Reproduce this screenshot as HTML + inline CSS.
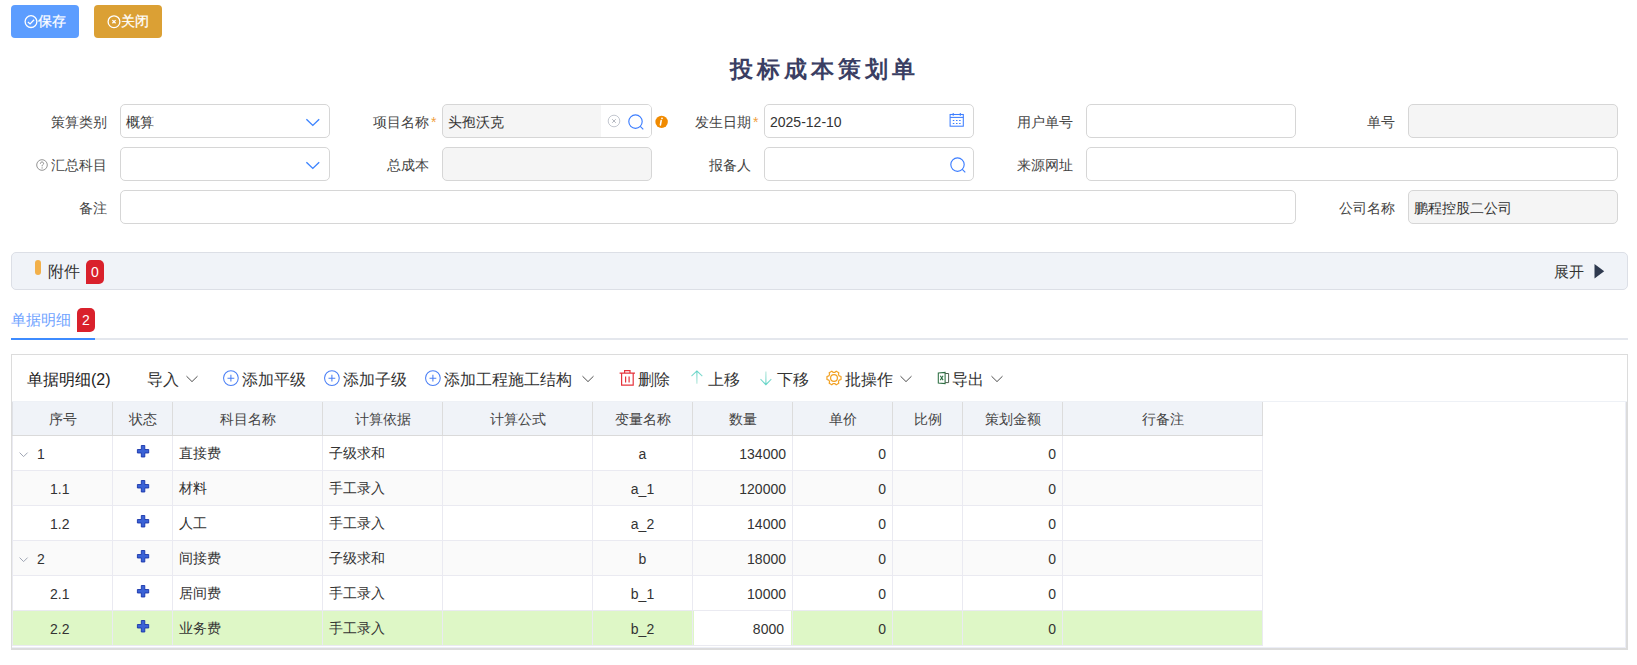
<!DOCTYPE html>
<html><head><meta charset="utf-8">
<style>
*{box-sizing:border-box;margin:0;padding:0}
html,body{width:1637px;height:665px;overflow:hidden;background:#fff;font-family:"Liberation Sans",sans-serif;color:#333;}
.abs{position:absolute}
.btn{position:absolute;top:5px;height:33px;width:68px;border-radius:4px;color:#fff;font-size:14px;line-height:33px;text-align:center}
.btn svg{position:absolute;top:10px;width:14px;height:14px}
.btn span{position:absolute;left:27px;top:0;-webkit-text-stroke:0.25px #fff}
.title{position:absolute;left:730px;top:52px;font-size:23px;font-weight:bold;color:#3a3e63;letter-spacing:4px;line-height:34px;white-space:nowrap}
.lbl{position:absolute;font-size:14px;color:#444;text-align:right;width:100px;line-height:36px;white-space:nowrap}
.inp{position:absolute;height:34px;border:1px solid #d6d6d6;border-radius:5px;background:#fff;font-size:14px;line-height:35px;padding-left:5px;color:#333}
.dis{background:#f5f5f5}
.star{color:#f0a040;font-size:14px;position:absolute;left:102px;top:0}

.badge{position:absolute;width:18px;height:24px;background:#d9212c;color:#fff;font-size:14px;line-height:25px;text-align:center;border-radius:5px 5px 5px 0}
.tb{font-size:16px;line-height:32px;color:#333;white-space:nowrap}
table.grid{border-collapse:collapse;table-layout:fixed;width:1250px;font-size:14px;color:#333}
.grid th{height:34px;padding-top:3px !important;background:#f0f3f8;font-weight:normal;color:#444;border:1px solid #dfe1e6;border-bottom-color:#dadada;border-right-color:#dcdcdc;border-top:0;text-align:center;padding:0}
.grid td{height:35px;border:1px solid #eaeaf1;padding:2px 6px 0 6px;white-space:nowrap;position:relative}
.grid tr.odd td{background:#fafafa}
.grid tr.sel td{background:#def7c6}
.grid tr.sel td.edit{background:#fff;box-shadow:inset 1px 0 0 #def7c6,inset -1px 0 0 #def7c6;padding-right:8px}
.ht{position:relative;top:1px}
.grid td.c{text-align:center}
.grid td.r{text-align:right}
.grid td.st svg.pl{position:absolute;left:23px;top:9px}
.chev{position:absolute;left:6px;top:16px}
.n1{position:absolute;left:24px;top:1px;line-height:34px}
.n2{position:absolute;left:37px;top:1px;line-height:34px}
</style></head><body>

<div class="btn" style="left:11px;background:#5c9dff">
  <svg style="left:13px" width="14" height="14" viewBox="0 0 14 14"><circle cx="7" cy="6.6" r="5.9" fill="none" stroke="#fff" stroke-width="1.3"/><path d="M3.9 6.9 L6.1 8.9 L10.1 4.8" fill="none" stroke="#fff" stroke-width="1.3"/></svg>
  <span>保存</span>
</div>
<div class="btn" style="left:94px;background:#dba034">
  <svg style="left:13px" width="14" height="14" viewBox="0 0 14 14"><circle cx="7" cy="6.7" r="5.9" fill="none" stroke="#fff" stroke-width="1.3"/><path d="M5.4 5.1 L8.6 8.3 M8.6 5.1 L5.4 8.3" fill="none" stroke="#fff" stroke-width="1.3"/></svg>
  <span>关闭</span>
</div>

<div class="title">投标成本策划单</div>

<!-- form row 1 -->
<div class="lbl" style="left:7px;top:104px">策算类别</div>
<div class="inp" style="left:120px;top:104px;width:210px">概算
  <svg class="abs" style="left:184px;top:13px" width="16" height="9" viewBox="0 0 16 9"><path d="M1.4 1.2 L7.8 7.4 L14.2 1.2" fill="none" stroke="#3d84ff" stroke-width="1.4"/></svg>
</div>

<div class="lbl" style="left:329px;top:104px">项目名称<span class="star">*</span></div>
<div class="inp dis" style="left:442px;top:104px;width:210px">头孢沃克
  <div class="abs" style="left:158px;top:0;width:50px;height:32px;background:#fff;border-radius:0 4px 4px 0"></div>
  <svg class="abs" style="left:164px;top:9px" width="14" height="14" viewBox="0 0 14 14"><circle cx="7" cy="7" r="5.8" fill="none" stroke="#c4c8d0" stroke-width="1"/><path d="M5.2 5.2 L8.8 8.8 M8.8 5.2 L5.2 8.8" stroke="#b4b8c0" stroke-width="1"/></svg>
  <svg class="abs" style="left:185px;top:9px" width="17" height="17" viewBox="0 0 17 17"><circle cx="7.5" cy="7.6" r="6.7" fill="none" stroke="#3d7eff" stroke-width="1.15"/><path d="M12.3 12.3 L15.3 15.3" stroke="#3d7eff" stroke-width="1.15"/></svg>
</div>
<svg class="abs" style="left:655px;top:115px" width="13" height="14" viewBox="0 0 13 14"><circle cx="6.6" cy="6.9" r="6.2" fill="#f08a00"/><path d="M6.2 5.5 L5.4 10" stroke="#fff" stroke-width="1.5" stroke-linecap="round"/><circle cx="7" cy="3.3" r="0.9" fill="#fff"/></svg>

<div class="lbl" style="left:651px;top:104px">发生日期<span class="star">*</span></div>
<div class="inp" style="left:764px;top:104px;width:210px">2025-12-10
  <svg class="abs" style="left:184px;top:7px" width="16" height="16" viewBox="0 0 16 16"><rect x="1.1" y="2.5" width="13.2" height="11.7" fill="none" stroke="#3d7eff" stroke-width="1.05"/><path d="M1.1 5.4 H14.3" stroke="#3d7eff" stroke-width="1.05"/><path d="M4.2 1 V3.8 M11.3 1 V3.8" stroke="#3d7eff" stroke-width="1.05"/><path d="M3.8 8.4 H5.3 M7 8.4 H8.5 M10.1 8.4 H11.6 M3.8 11.4 H5.3 M7 11.4 H8.5 M10.1 11.4 H11.6" stroke="#3d7eff" stroke-width="1.05"/></svg>
</div>

<div class="lbl" style="left:973px;top:104px">用户单号</div>
<div class="inp" style="left:1086px;top:104px;width:210px"></div>

<div class="lbl" style="left:1295px;top:104px">单号</div>
<div class="inp dis" style="left:1408px;top:104px;width:210px"></div>

<!-- form row 2 -->
<div class="lbl" style="left:7px;top:147px"><svg style="vertical-align:-1px;margin-right:3px" width="12" height="12" viewBox="0 0 12 12"><circle cx="6" cy="6" r="5.3" fill="none" stroke="#888" stroke-width="0.9"/><path d="M4.4 4.7 C4.4 3.6 5.1 3 6 3 C6.9 3 7.6 3.6 7.6 4.5 C7.6 5.5 6.1 5.7 6.1 7 V7.3" fill="none" stroke="#8a8a8a" stroke-width="1"/><circle cx="6.1" cy="8.9" r="0.65" fill="#8a8a8a"/></svg>汇总科目</div>
<div class="inp" style="left:120px;top:147px;width:210px">
  <svg class="abs" style="left:184px;top:13px" width="16" height="9" viewBox="0 0 16 9"><path d="M1.4 1.2 L7.8 7.4 L14.2 1.2" fill="none" stroke="#3d84ff" stroke-width="1.4"/></svg>
</div>

<div class="lbl" style="left:329px;top:147px">总成本</div>
<div class="inp dis" style="left:442px;top:147px;width:210px"></div>

<div class="lbl" style="left:651px;top:147px">报备人</div>
<div class="inp" style="left:764px;top:147px;width:210px">
  <svg class="abs" style="left:185px;top:9px" width="17" height="17" viewBox="0 0 17 17"><circle cx="7.5" cy="7.6" r="6.7" fill="none" stroke="#3d7eff" stroke-width="1.15"/><path d="M12.3 12.3 L15.3 15.3" stroke="#3d7eff" stroke-width="1.15"/></svg>
</div>

<div class="lbl" style="left:973px;top:147px">来源网址</div>
<div class="inp" style="left:1086px;top:147px;width:532px"></div>

<!-- form row 3 -->
<div class="lbl" style="left:7px;top:190px">备注</div>
<div class="inp" style="left:120px;top:190px;width:1176px"></div>

<div class="lbl" style="left:1295px;top:190px">公司名称</div>
<div class="inp dis" style="left:1408px;top:190px;width:210px">鹏程控股二公司</div>


<!-- attachment bar -->
<div class="abs" style="left:11px;top:252px;width:1617px;height:38px;background:#f0f3f8;border:1px solid #dcdfe6;border-radius:5px"></div>
<div class="abs" style="left:35px;top:260px;width:6px;height:15px;background:#f2b04a;border-radius:3px"></div>
<div class="abs" style="left:48px;top:256px;font-size:16px;line-height:32px;color:#333">附件</div>
<div class="badge" style="left:86px;top:260px">0</div>
<div class="abs" style="left:1554px;top:256px;font-size:15px;line-height:32px;color:#333">展开</div>
<svg class="abs" style="left:1594px;top:264px" width="11" height="15" viewBox="0 0 11 15"><path d="M0.5 0 L10.2 7.3 L0.5 14.6 Z" fill="#2f3a4f"/></svg>

<!-- tabs -->
<div class="abs" style="left:11px;top:304px;font-size:15px;line-height:32px;color:#6fa3ff">单据明细</div>
<div class="badge" style="left:77px;top:308px">2</div>
<div class="abs" style="left:11px;top:338px;width:1617px;height:2px;background:#e4e7ed"></div>
<div class="abs" style="left:11px;top:338px;width:84px;height:2px;background:#3d8bff"></div>

<!-- table container -->
<div class="abs" style="left:11px;top:354px;width:1617px;height:296px;border:1px solid #dcdcdc"></div>
<div class="abs" style="left:1626px;top:402px;width:1px;height:247px;background:#dcdcdc"></div>
<div class="abs" style="left:12px;top:648px;width:1615px;height:1px;background:#dcdcdc"></div>
<div class="abs" style="left:1625px;top:402px;width:1px;height:246px;background:#eceef6"></div>
<div class="abs" style="left:12px;top:647px;width:1614px;height:1px;background:#eceef6"></div>
<div class="abs tb" style="left:27px;top:364px;color:#222">单据明细(2)</div>
<div class="abs tb" style="left:147px;top:364px">导入</div>
<svg class="abs" style="left:185px;top:375px" width="14" height="8" viewBox="0 0 14 8"><path d="M1.5 1.2 L7 6.6 L12.5 1.2" fill="none" stroke="#444" stroke-width="0.95"/></svg>
<svg class="abs" style="left:222px;top:370px" width="17" height="17" viewBox="0 0 17 17"><circle cx="8.9" cy="8.1" r="7.35" fill="none" stroke="#4a7ff5" stroke-width="1.05"/><path d="M8.9 4.8 V11.6 M5.5 8.2 H12.3" stroke="#4a7ff5" stroke-width="1.05"/></svg>
<div class="abs tb" style="left:242px;top:364px">添加平级</div>
<svg class="abs" style="left:323px;top:370px" width="17" height="17" viewBox="0 0 17 17"><circle cx="8.9" cy="8.1" r="7.35" fill="none" stroke="#4a7ff5" stroke-width="1.05"/><path d="M8.9 4.8 V11.6 M5.5 8.2 H12.3" stroke="#4a7ff5" stroke-width="1.05"/></svg>
<div class="abs tb" style="left:343px;top:364px">添加子级</div>
<svg class="abs" style="left:424px;top:370px" width="17" height="17" viewBox="0 0 17 17"><circle cx="8.9" cy="8.1" r="7.35" fill="none" stroke="#4a7ff5" stroke-width="1.05"/><path d="M8.9 4.8 V11.6 M5.5 8.2 H12.3" stroke="#4a7ff5" stroke-width="1.05"/></svg>
<div class="abs tb" style="left:444px;top:364px">添加工程施工结构</div>
<svg class="abs" style="left:581px;top:375px" width="14" height="8" viewBox="0 0 14 8"><path d="M1.5 1.2 L7 6.6 L12.5 1.2" fill="none" stroke="#444" stroke-width="0.95"/></svg>
<svg class="abs" style="left:619px;top:369px" width="17" height="18" viewBox="0 0 17 18"><path d="M0.6 4.1 H16 M5.6 4.1 V1.6 H11 V4.1 M2.6 4.1 V16.2 H14.2 V4.1 M6.6 7.4 V13.6 M10.1 7.4 V13.6" fill="none" stroke="#e5343c" stroke-width="1.2"/></svg>
<div class="abs tb" style="left:638px;top:364px">删除</div>
<svg class="abs" style="left:690px;top:370px" width="14" height="15" viewBox="0 0 14 15"><defs><linearGradient id="gu" x1="0" y1="0" x2="0" y2="1"><stop offset="0" stop-color="#5fd3c6"/><stop offset="1" stop-color="#b8e8dc"/></linearGradient></defs><path d="M6.9 1 V13.8 M1.5 6.2 L6.9 0.9 L12.3 6.2" fill="none" stroke="url(#gu)" stroke-width="1.1"/></svg>
<div class="abs tb" style="left:708px;top:364px">上移</div>
<svg class="abs" style="left:759px;top:371px" width="14" height="15" viewBox="0 0 14 15"><defs><linearGradient id="gd" x1="0" y1="0" x2="0" y2="1"><stop offset="0" stop-color="#b8e8dc"/><stop offset="1" stop-color="#5fd3c6"/></linearGradient></defs><path d="M6.9 0.5 V13.5 M1.5 8.2 L6.9 13.6 L12.3 8.2" fill="none" stroke="url(#gd)" stroke-width="1.1"/></svg>
<div class="abs tb" style="left:777px;top:364px">下移</div>
<svg class="abs" style="left:825px;top:369px" width="18" height="18" viewBox="0 0 18 18"><path d="M14.19 6.90 L16.04 7.50 L16.04 10.50 L14.19 11.10 L13.41 12.45 L13.82 14.35 L11.22 15.85 L9.78 14.55 L8.22 14.55 L6.78 15.85 L4.18 14.35 L4.59 12.45 L3.81 11.10 L1.96 10.50 L1.96 7.50 L3.81 6.90 L4.59 5.55 L4.18 3.65 L6.78 2.15 L8.22 3.45 L9.78 3.45 L11.22 2.15 L13.82 3.65 L13.41 5.55 Z" fill="none" stroke="#f2a122" stroke-width="1.2" stroke-linejoin="round"/><circle cx="9" cy="9" r="3.4" fill="none" stroke="#f2a122" stroke-width="1.2"/></svg>
<div class="abs tb" style="left:845px;top:364px">批操作</div>
<svg class="abs" style="left:899px;top:375px" width="14" height="8" viewBox="0 0 14 8"><path d="M1.5 1.2 L7 6.6 L12.5 1.2" fill="none" stroke="#444" stroke-width="0.95"/></svg>
<svg class="abs" style="left:936px;top:371px" width="14" height="14" viewBox="0 0 14 14"><path d="M2.3 1.9 L9.1 1.4 V12.6 L2.3 12.1 Z" fill="none" stroke="#2b6e40" stroke-width="1.05"/><path d="M9.1 2.5 H12.6 V11.6 H9.1" fill="none" stroke="#4f5f50" stroke-width="1"/><path d="M4.3 4.7 L7.1 9.1 M7.1 4.7 L4.3 9.1" stroke="#2b6e40" stroke-width="1.1"/></svg>
<div class="abs tb" style="left:952px;top:364px">导出</div>
<svg class="abs" style="left:990px;top:375px" width="14" height="8" viewBox="0 0 14 8"><path d="M1.5 1.2 L7 6.6 L12.5 1.2" fill="none" stroke="#444" stroke-width="0.95"/></svg>

<!-- grid -->
<table class="grid abs" style="left:12px;top:401px">
<colgroup><col style="width:100px"><col style="width:60px"><col style="width:150px"><col style="width:120px"><col style="width:150px"><col style="width:100px"><col style="width:100px"><col style="width:100px"><col style="width:70px"><col style="width:100px"><col style="width:200px"></colgroup>
<tr class="hd"><th><span class="ht">序号</span></th><th><span class="ht">状态</span></th><th><span class="ht">科目名称</span></th><th><span class="ht">计算依据</span></th><th><span class="ht">计算公式</span></th><th><span class="ht">变量名称</span></th><th><span class="ht">数量</span></th><th><span class="ht">单价</span></th><th><span class="ht">比例</span></th><th><span class="ht">策划金额</span></th><th><span class="ht">行备注</span></th></tr>
<tr class=""><td class="no"><svg class="chev" width="10" height="6" viewBox="0 0 10 6"><path d="M0.6 0.6 L4.6 4.6 L8.6 0.6" fill="none" stroke="#9aa0b0" stroke-width="0.95"/></svg><span class="n1">1</span></td><td class="c st"><svg class="pl" width="14" height="14" viewBox="0 0 14 14"><path d="M5.3 0.5 H8.8 V4.5 H12.7 V8.0 H8.8 V12.0 H5.3 V8.0 H1.4 V4.5 H5.3 Z" fill="#3a62d6" stroke="#1430a6" stroke-width="0.85"/></svg></td><td>直接费</td><td>子级求和</td><td></td><td class="c">a</td><td class="r">134000</td><td class="r">0</td><td></td><td class="r">0</td><td></td></tr>
<tr class="odd"><td class="no"><span class="n2">1.1</span></td><td class="c st"><svg class="pl" width="14" height="14" viewBox="0 0 14 14"><path d="M5.3 0.5 H8.8 V4.5 H12.7 V8.0 H8.8 V12.0 H5.3 V8.0 H1.4 V4.5 H5.3 Z" fill="#3a62d6" stroke="#1430a6" stroke-width="0.85"/></svg></td><td>材料</td><td>手工录入</td><td></td><td class="c">a_1</td><td class="r">120000</td><td class="r">0</td><td></td><td class="r">0</td><td></td></tr>
<tr class=""><td class="no"><span class="n2">1.2</span></td><td class="c st"><svg class="pl" width="14" height="14" viewBox="0 0 14 14"><path d="M5.3 0.5 H8.8 V4.5 H12.7 V8.0 H8.8 V12.0 H5.3 V8.0 H1.4 V4.5 H5.3 Z" fill="#3a62d6" stroke="#1430a6" stroke-width="0.85"/></svg></td><td>人工</td><td>手工录入</td><td></td><td class="c">a_2</td><td class="r">14000</td><td class="r">0</td><td></td><td class="r">0</td><td></td></tr>
<tr class="odd"><td class="no"><svg class="chev" width="10" height="6" viewBox="0 0 10 6"><path d="M0.6 0.6 L4.6 4.6 L8.6 0.6" fill="none" stroke="#9aa0b0" stroke-width="0.95"/></svg><span class="n1">2</span></td><td class="c st"><svg class="pl" width="14" height="14" viewBox="0 0 14 14"><path d="M5.3 0.5 H8.8 V4.5 H12.7 V8.0 H8.8 V12.0 H5.3 V8.0 H1.4 V4.5 H5.3 Z" fill="#3a62d6" stroke="#1430a6" stroke-width="0.85"/></svg></td><td>间接费</td><td>子级求和</td><td></td><td class="c">b</td><td class="r">18000</td><td class="r">0</td><td></td><td class="r">0</td><td></td></tr>
<tr class=""><td class="no"><span class="n2">2.1</span></td><td class="c st"><svg class="pl" width="14" height="14" viewBox="0 0 14 14"><path d="M5.3 0.5 H8.8 V4.5 H12.7 V8.0 H8.8 V12.0 H5.3 V8.0 H1.4 V4.5 H5.3 Z" fill="#3a62d6" stroke="#1430a6" stroke-width="0.85"/></svg></td><td>居间费</td><td>手工录入</td><td></td><td class="c">b_1</td><td class="r">10000</td><td class="r">0</td><td></td><td class="r">0</td><td></td></tr>
<tr class="sel"><td class="no"><span class="n2">2.2</span></td><td class="c st"><svg class="pl" width="14" height="14" viewBox="0 0 14 14"><path d="M5.3 0.5 H8.8 V4.5 H12.7 V8.0 H8.8 V12.0 H5.3 V8.0 H1.4 V4.5 H5.3 Z" fill="#3a62d6" stroke="#1430a6" stroke-width="0.85"/></svg></td><td>业务费</td><td>手工录入</td><td></td><td class="c">b_2</td><td class="r edit">8000</td><td class="r">0</td><td></td><td class="r">0</td><td></td></tr>
</table>
<div class="abs" style="left:12px;top:401px;width:1615px;height:1px;background:#eef1f6"></div>
</body></html>
